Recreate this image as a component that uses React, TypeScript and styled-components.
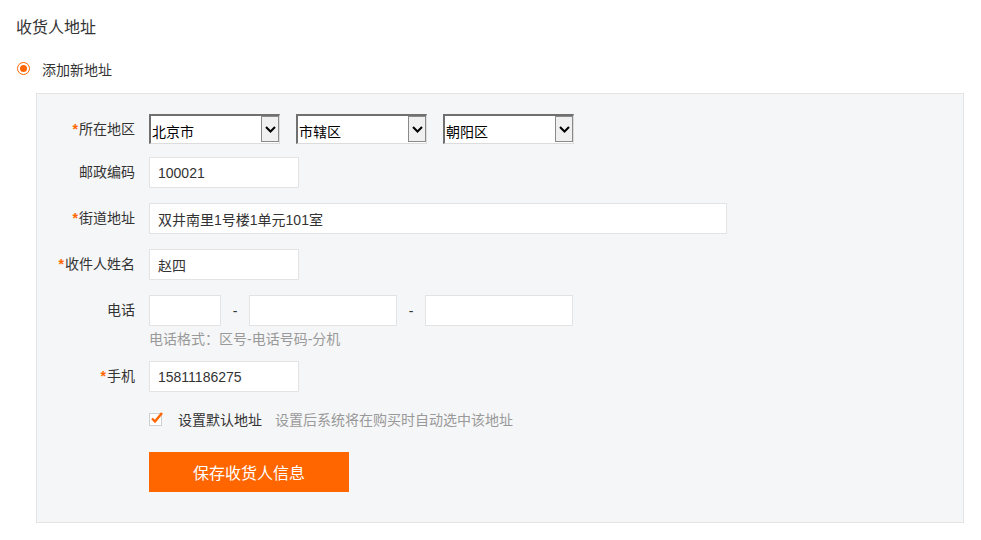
import React from "react";
import styled, { createGlobalStyle } from "styled-components";

const GlobalStyle = createGlobalStyle`
  body {
    margin: 0;
    background: #fff;
    color: #333;
    font-family: "Liberation Sans", "Noto Sans CJK SC", sans-serif;
    font-size: 14px;
  }
`

const Page = styled.div`
  width: 981px;
  padding: 0 17px 0 16px;
  box-sizing: border-box;
`

const Title = styled.h3`
  margin: 0;
  padding-top: 18px;
  height: 20px;
  line-height: 20px;
  font-size: 16px;
  font-weight: normal;
  color: #333;
`

const RadioLine = styled.label`
  display: flex;
  align-items: center;
  margin-top: 21px;
  height: 20px;
  font-size: 14px;
  color: #333;
`

const RadioDot = styled.span`
  width: 13px;
  height: 13px;
  box-sizing: border-box;
  border: 1.5px solid #ff6600;
  border-radius: 50%;
  margin: -1px 12px 0 1px;
  display: flex;
  align-items: center;
  justify-content: center;

  &::after {
    content: "";
    width: 7px;
    height: 7px;
    border-radius: 50%;
    background: #ff6600;
  }
`

const Panel = styled.div`
  margin: 14px 0 0 20px;
  width: 928px;
  height: 430px;
  box-sizing: border-box;
  border: 1px solid #e4e4e4;
  background: #f5f6f7;
  padding-top: 20px;
`

const Row = styled.div<{ $gap?: number }>`
  display: flex;
  align-items: flex-start;
  margin-bottom: ${(p) => p.$gap ?? 15}px;
`

const Label = styled.div<{ $h?: number }>`
  width: 98px;
  margin-right: 14px;
  text-align: right;
  line-height: ${(p) => p.$h ?? 31}px;
  color: #333;
  flex-shrink: 0;
`

const Star = styled.span`
  color: #ff6600;
  font-weight: bold;
  margin-right: 1px;
`

const Field = styled.div`
  display: flex;
  flex-direction: column;
`

const Inline = styled.div`
  display: flex;
  align-items: center;
`

const Input = styled.input<{ $w: number }>`
  width: ${(p) => p.$w}px;
  height: 31px;
  box-sizing: border-box;
  border: 1px solid #e3e3e3;
  background: #fff;
  padding: 0 8px;
  font-family: "Liberation Sans", "Noto Sans CJK SC", sans-serif;
  font-size: 14px;
  color: #333;
  outline: none;
`

const Dash = styled.span<{ $w: number }>`
  width: ${(p) => p.$w}px;
  text-align: center;
  color: #333;
`

const SelectBox = styled.div`
  display: flex;
  width: 131px;
  height: 30px;
  box-sizing: border-box;
  border-top: 2px solid #707070;
  border-left: 2px solid #707070;
  border-right: 1px solid #dcdcdc;
  border-bottom: 1px solid #dcdcdc;
  background: #fff;
  margin-right: 16px;
`

const Select = styled.select`
  flex: 1;
  min-width: 0;
  appearance: none;
  border: none;
  background: transparent;
  padding: 4px 0 0 1px;
  font-family: "Liberation Sans", "Noto Sans CJK SC", sans-serif;
  font-size: 14px;
  color: #000;
  outline: none;
`

const SelectButton = styled.span`
  width: 18px;
  height: 26px;
  box-sizing: border-box;
  border: 1px solid #8a8a8a;
  background: #f0f0f0;
  display: flex;
  align-items: center;
  justify-content: center;
`

const Hint = styled.div`
  margin-top: 5px;
  line-height: 16px;
  color: #999;
  font-size: 14px;
`

const CheckLine = styled.label`
  display: flex;
  align-items: center;
  height: 18px;
  color: #333;
`

const CheckBox = styled.span`
  position: relative;
  width: 13px;
  height: 13px;
  box-sizing: border-box;
  border: 1px solid #cfcfcf;
  background: #fff;
  margin-right: 16px;

  svg {
    position: absolute;
    left: 0;
    top: -3px;
  }
`

const CheckHint = styled.span`
  color: #999;
  margin-left: 13px;
`

const SaveButton = styled.button`
  width: 200px;
  height: 40px;
  border: none;
  background: #ff6600;
  color: #fff;
  font-family: "Noto Sans CJK SC", sans-serif;
  font-size: 16px;
  cursor: pointer;
`

const Arrow = () => (
  <svg width="11" height="7" viewBox="0 0 11 7">
    <path d="M1 1 L5.5 5.5 L10 1" fill="none" stroke="#000" strokeWidth="2" />
  </svg>
);

const RegionSelect = ({ value }: { value: string }) => (
  <SelectBox>
    <Select defaultValue={value}>
      <option>{value}</option>
    </Select>
    <SelectButton>
      <Arrow />
    </SelectButton>
  </SelectBox>
);

const App = () => {
  return (
    <Page>
      <GlobalStyle />
      <Title>收货人地址</Title>
      <RadioLine>
        <RadioDot />
        添加新地址
      </RadioLine>
      <Panel>
        <Row $gap={13}>
          <Label $h={30}><Star>*</Star>所在地区</Label>
          <Inline>
            <RegionSelect value="北京市" />
            <RegionSelect value="市辖区" />
            <RegionSelect value="朝阳区" />
          </Inline>
        </Row>
        <Row>
          <Label>邮政编码</Label>
          <Input $w={150} defaultValue="100021" />
        </Row>
        <Row>
          <Label><Star>*</Star>街道地址</Label>
          <Input $w={578} defaultValue="双井南里1号楼1单元101室" />
        </Row>
        <Row>
          <Label><Star>*</Star>收件人姓名</Label>
          <Input $w={150} defaultValue="赵四" />
        </Row>
        <Row $gap={14}>
          <Label>电话</Label>
          <Field>
            <Inline>
              <Input $w={72} />
              <Dash $w={28}>-</Dash>
              <Input $w={148} />
              <Dash $w={28}>-</Dash>
              <Input $w={148} />
            </Inline>
            <Hint>电话格式：区号-电话号码-分机</Hint>
          </Field>
        </Row>
        <Row $gap={18}>
          <Label><Star>*</Star>手机</Label>
          <Input $w={150} defaultValue="15811186275" />
        </Row>
        <Row $gap={24}>
          <Label $h={18} />
          <CheckLine>
            <CheckBox>
              <svg width="14" height="14" viewBox="0 0 14 14">
                <path d="M2 7.5 L5 10.5 L12 2" fill="none" stroke="#ff6600" strokeWidth="2.4" />
              </svg>
            </CheckBox>
            设置默认地址
            <CheckHint>设置后系统将在购买时自动选中该地址</CheckHint>
          </CheckLine>
        </Row>
        <Row>
          <Label />
          <SaveButton>保存收货人信息</SaveButton>
        </Row>
      </Panel>
    </Page>
  );
};

export default App;
